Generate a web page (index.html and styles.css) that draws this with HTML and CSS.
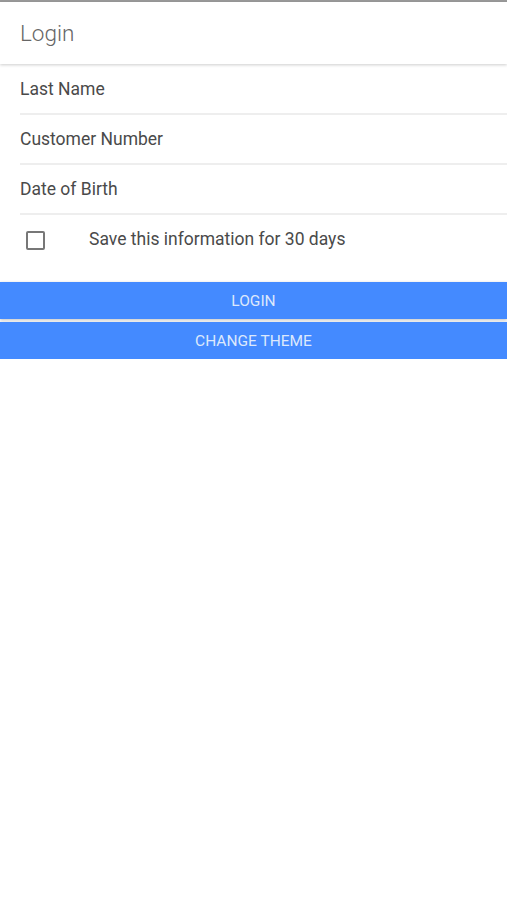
FILE: index.html
```html
<!DOCTYPE html>
<html>
<head>
<meta charset="utf-8">
<link rel="stylesheet" href="styles.css">
</head>
<body>
<div class="topline"></div>
<header class="header">Login</header>
<div class="form">
  <div class="field">Last Name</div>
  <div class="field">Customer Number</div>
  <div class="field">Date of Birth</div>
  <div class="check-row">
    <span class="checkbox"></span>
    <span class="check-label">Save this information for 30 days</span>
  </div>
</div>
<div class="buttons">
  <button class="btn">LOGIN</button>
  <button class="btn">CHANGE THEME</button>
</div>
</body>
</html>
```
FILE: styles.css
```css
html, body {
  margin: 0;
  padding: 0;
  background: #fff;
  font-family: Roboto, "Liberation Sans", sans-serif;
}
.topline {
  height: 2px;
  background: #9a9a9a;
}
.header {
  height: 62px;
  display: flex;
  align-items: center;
  padding-left: 20px;
  font-size: 22.5px;
  font-weight: 300;
  color: #666;
  box-shadow: 0 1px 3px rgba(0,0,0,0.2);
  position: relative;
}
.form {
  padding-top: 1px;
}
.field {
  height: 48px;
  margin-left: 20px;
  border-bottom: 2px solid #eeeeee;
  display: flex;
  align-items: center;
  font-size: 17.5px;
  color: #4a4a4a;
  padding-bottom: 1px;
  box-sizing: content-box;
}
.field {
  height: 47px;
}
.check-row {
  height: 50px;
  display: flex;
  align-items: center;
  padding-left: 26px;
}
.checkbox {
  width: 15px;
  height: 15px;
  border: 2px solid #777;
  border-radius: 2px;
  flex: none;
}
.check-label {
  margin-left: 44px;
  font-size: 17.5px;
  color: #4a4a4a;
  margin-top: -3px;
}
.buttons {
  margin-top: 17px;
  display: flex;
  flex-direction: column;
  gap: 3px;
}
.btn {
  height: 37px;
  border: none;
  margin: 0;
  background: #448aff;
  color: #dce8fc;
  font-family: Roboto, "Liberation Sans", sans-serif;
  font-size: 15.5px;
  font-weight: 400;
  box-shadow: 0 1px 3px rgba(0,0,0,0.25);
  width: 100%;
}
```
